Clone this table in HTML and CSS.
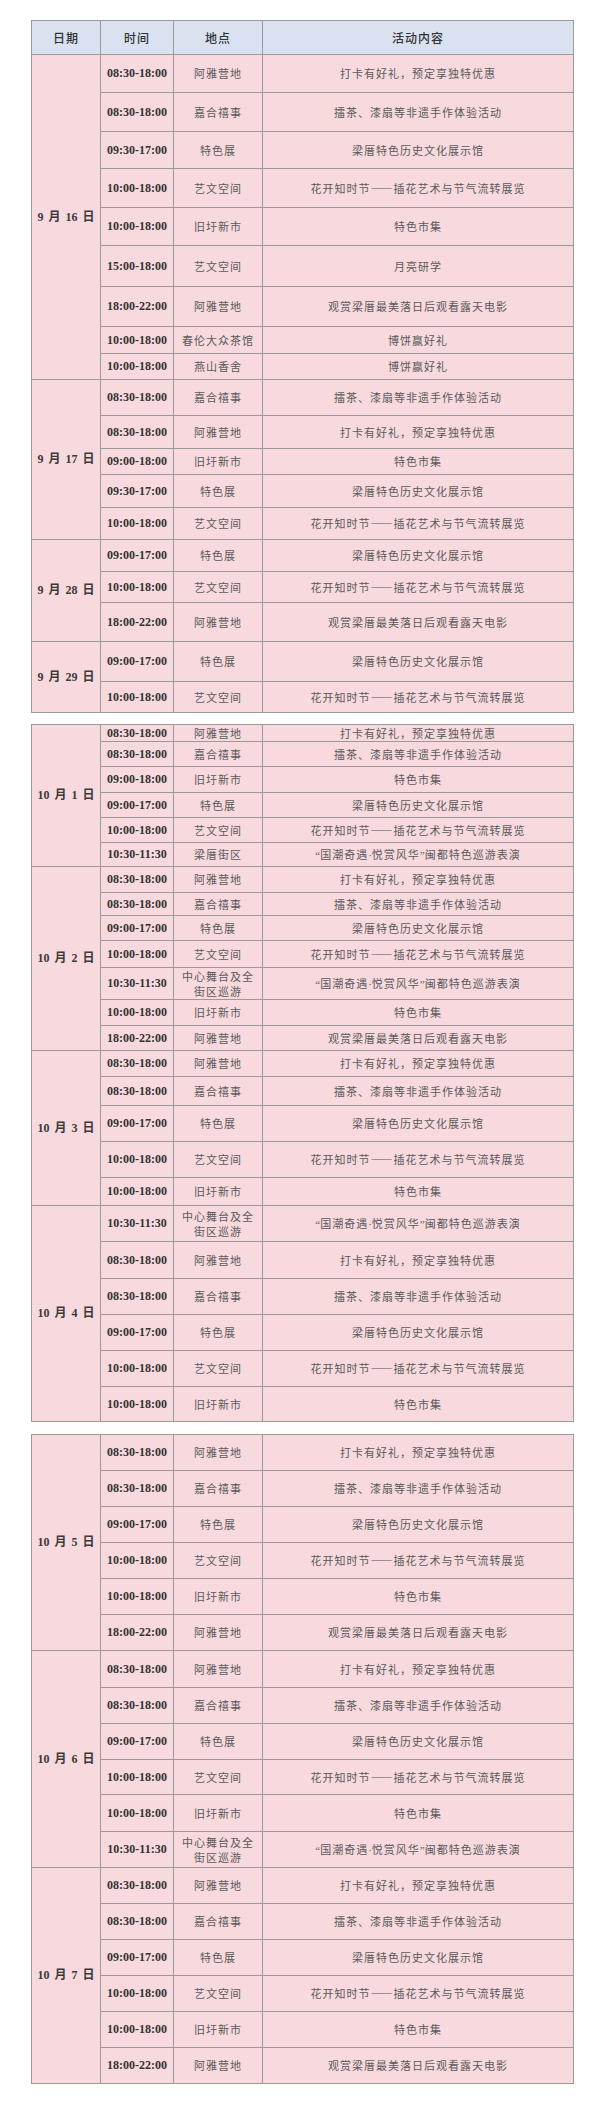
FILE: index.html
```html
<!DOCTYPE html>
<html lang="zh-CN">
<head>
<meta charset="utf-8">
<title>活动安排</title>
<link rel="stylesheet" href="styles.css">
</head>
<body>
<main class="page">
  <table class="sched">
    <colgroup><col class="c-date"><col class="c-time"><col class="c-place"><col class="c-act"></colgroup>
    <thead>
      <tr class="h34"><th>日期</th><th>时间</th><th>地点</th><th>活动内容</th></tr>
    </thead>
    <tbody>
      <tr class="h38"><td class="date" rowspan="9">9 月 16 日</td><td class="time">08:30-18:00</td><td class="place">阿雅营地</td><td class="act">打卡有好礼，预定享独特优惠</td></tr>
      <tr class="h39"><td class="time">08:30-18:00</td><td class="place">嘉合禧事</td><td class="act">擂茶、漆扇等非遗手作体验活动</td></tr>
      <tr class="h37"><td class="time">09:30-17:00</td><td class="place">特色展</td><td class="act">梁厝特色历史文化展示馆</td></tr>
      <tr class="h39"><td class="time">10:00-18:00</td><td class="place">艺文空间</td><td class="act">花开知时节——插花艺术与节气流转展览</td></tr>
      <tr class="h38"><td class="time">10:00-18:00</td><td class="place">旧圩新市</td><td class="act">特色市集</td></tr>
      <tr class="h41"><td class="time">15:00-18:00</td><td class="place">艺文空间</td><td class="act">月亮研学</td></tr>
      <tr class="h40"><td class="time">18:00-22:00</td><td class="place">阿雅营地</td><td class="act">观赏梁厝最美落日后观看露天电影</td></tr>
      <tr class="h27"><td class="time">10:00-18:00</td><td class="place">春伦大众茶馆</td><td class="act">博饼赢好礼</td></tr>
      <tr class="h26"><td class="time">10:00-18:00</td><td class="place">燕山香舍</td><td class="act">博饼赢好礼</td></tr>

      <tr class="h36"><td class="date" rowspan="5">9 月 17 日</td><td class="time">08:30-18:00</td><td class="place">嘉合禧事</td><td class="act">擂茶、漆扇等非遗手作体验活动</td></tr>
      <tr class="h33"><td class="time">08:30-18:00</td><td class="place">阿雅营地</td><td class="act">打卡有好礼，预定享独特优惠</td></tr>
      <tr class="h26"><td class="time">09:00-18:00</td><td class="place">旧圩新市</td><td class="act">特色市集</td></tr>
      <tr class="h33"><td class="time">09:30-17:00</td><td class="place">特色展</td><td class="act">梁厝特色历史文化展示馆</td></tr>
      <tr class="h32"><td class="time">10:00-18:00</td><td class="place">艺文空间</td><td class="act">花开知时节——插花艺术与节气流转展览</td></tr>

      <tr class="h32"><td class="date" rowspan="3">9 月 28 日</td><td class="time">09:00-17:00</td><td class="place">特色展</td><td class="act">梁厝特色历史文化展示馆</td></tr>
      <tr class="h31"><td class="time">10:00-18:00</td><td class="place">艺文空间</td><td class="act">花开知时节——插花艺术与节气流转展览</td></tr>
      <tr class="h39"><td class="time">18:00-22:00</td><td class="place">阿雅营地</td><td class="act">观赏梁厝最美落日后观看露天电影</td></tr>

      <tr class="h40"><td class="date" rowspan="2">9 月 29 日</td><td class="time">09:00-17:00</td><td class="place">特色展</td><td class="act">梁厝特色历史文化展示馆</td></tr>
      <tr class="h31"><td class="time">10:00-18:00</td><td class="place">艺文空间</td><td class="act">花开知时节——插花艺术与节气流转展览</td></tr>
    </tbody>
  </table>

  <table class="sched">
    <colgroup><col class="c-date"><col class="c-time"><col class="c-place"><col class="c-act"></colgroup>
    <tbody>
      <tr class="h17"><td class="date" rowspan="6">10 月 1 日</td><td class="time">08:30-18:00</td><td class="place">阿雅营地</td><td class="act">打卡有好礼，预定享独特优惠</td></tr>
      <tr class="h25"><td class="time">08:30-18:00</td><td class="place">嘉合禧事</td><td class="act">擂茶、漆扇等非遗手作体验活动</td></tr>
      <tr class="h26"><td class="time">09:00-18:00</td><td class="place">旧圩新市</td><td class="act">特色市集</td></tr>
      <tr class="h25"><td class="time">09:00-17:00</td><td class="place">特色展</td><td class="act">梁厝特色历史文化展示馆</td></tr>
      <tr class="h25"><td class="time">10:00-18:00</td><td class="place">艺文空间</td><td class="act">花开知时节——插花艺术与节气流转展览</td></tr>
      <tr class="h24"><td class="time">10:30-11:30</td><td class="place">梁厝街区</td><td class="act"><span class="lat">“</span>国潮奇遇<span class="lat">·</span>悦赏风华<span class="lat">”</span>闽都特色巡游表演</td></tr>

      <tr class="h26"><td class="date" rowspan="7">10 月 2 日</td><td class="time">08:30-18:00</td><td class="place">阿雅营地</td><td class="act">打卡有好礼，预定享独特优惠</td></tr>
      <tr class="h23"><td class="time">08:30-18:00</td><td class="place">嘉合禧事</td><td class="act">擂茶、漆扇等非遗手作体验活动</td></tr>
      <tr class="h25"><td class="time">09:00-17:00</td><td class="place">特色展</td><td class="act">梁厝特色历史文化展示馆</td></tr>
      <tr class="h27"><td class="time">10:00-18:00</td><td class="place">艺文空间</td><td class="act">花开知时节——插花艺术与节气流转展览</td></tr>
      <tr class="h32"><td class="time">10:30-11:30</td><td class="place">中心舞台及全街区巡游</td><td class="act"><span class="lat">“</span>国潮奇遇<span class="lat">·</span>悦赏风华<span class="lat">”</span>闽都特色巡游表演</td></tr>
      <tr class="h26"><td class="time">10:00-18:00</td><td class="place">旧圩新市</td><td class="act">特色市集</td></tr>
      <tr class="h25"><td class="time">18:00-22:00</td><td class="place">阿雅营地</td><td class="act">观赏梁厝最美落日后观看露天电影</td></tr>

      <tr class="h26"><td class="date" rowspan="5">10 月 3 日</td><td class="time">08:30-18:00</td><td class="place">阿雅营地</td><td class="act">打卡有好礼，预定享独特优惠</td></tr>
      <tr class="h29"><td class="time">08:30-18:00</td><td class="place">嘉合禧事</td><td class="act">擂茶、漆扇等非遗手作体验活动</td></tr>
      <tr class="h36"><td class="time">09:00-17:00</td><td class="place">特色展</td><td class="act">梁厝特色历史文化展示馆</td></tr>
      <tr class="h36"><td class="time">10:00-18:00</td><td class="place">艺文空间</td><td class="act">花开知时节——插花艺术与节气流转展览</td></tr>
      <tr class="h28"><td class="time">10:00-18:00</td><td class="place">旧圩新市</td><td class="act">特色市集</td></tr>

      <tr class="h36"><td class="date" rowspan="6">10 月 4 日</td><td class="time">10:30-11:30</td><td class="place">中心舞台及全街区巡游</td><td class="act"><span class="lat">“</span>国潮奇遇<span class="lat">·</span>悦赏风华<span class="lat">”</span>闽都特色巡游表演</td></tr>
      <tr class="h37"><td class="time">08:30-18:00</td><td class="place">阿雅营地</td><td class="act">打卡有好礼，预定享独特优惠</td></tr>
      <tr class="h36"><td class="time">08:30-18:00</td><td class="place">嘉合禧事</td><td class="act">擂茶、漆扇等非遗手作体验活动</td></tr>
      <tr class="h36"><td class="time">09:00-17:00</td><td class="place">特色展</td><td class="act">梁厝特色历史文化展示馆</td></tr>
      <tr class="h36"><td class="time">10:00-18:00</td><td class="place">艺文空间</td><td class="act">花开知时节——插花艺术与节气流转展览</td></tr>
      <tr class="h35"><td class="time">10:00-18:00</td><td class="place">旧圩新市</td><td class="act">特色市集</td></tr>
    </tbody>
  </table>

  <table class="sched">
    <colgroup><col class="c-date"><col class="c-time"><col class="c-place"><col class="c-act"></colgroup>
    <tbody>
      <tr class="h36"><td class="date" rowspan="6">10 月 5 日</td><td class="time">08:30-18:00</td><td class="place">阿雅营地</td><td class="act">打卡有好礼，预定享独特优惠</td></tr>
      <tr class="h36"><td class="time">08:30-18:00</td><td class="place">嘉合禧事</td><td class="act">擂茶、漆扇等非遗手作体验活动</td></tr>
      <tr class="h36"><td class="time">09:00-17:00</td><td class="place">特色展</td><td class="act">梁厝特色历史文化展示馆</td></tr>
      <tr class="h36"><td class="time">10:00-18:00</td><td class="place">艺文空间</td><td class="act">花开知时节——插花艺术与节气流转展览</td></tr>
      <tr class="h36"><td class="time">10:00-18:00</td><td class="place">旧圩新市</td><td class="act">特色市集</td></tr>
      <tr class="h36"><td class="time">18:00-22:00</td><td class="place">阿雅营地</td><td class="act">观赏梁厝最美落日后观看露天电影</td></tr>

      <tr class="h37"><td class="date" rowspan="6">10 月 6 日</td><td class="time">08:30-18:00</td><td class="place">阿雅营地</td><td class="act">打卡有好礼，预定享独特优惠</td></tr>
      <tr class="h36"><td class="time">08:30-18:00</td><td class="place">嘉合禧事</td><td class="act">擂茶、漆扇等非遗手作体验活动</td></tr>
      <tr class="h36"><td class="time">09:00-17:00</td><td class="place">特色展</td><td class="act">梁厝特色历史文化展示馆</td></tr>
      <tr class="h35"><td class="time">10:00-18:00</td><td class="place">艺文空间</td><td class="act">花开知时节——插花艺术与节气流转展览</td></tr>
      <tr class="h37"><td class="time">10:00-18:00</td><td class="place">旧圩新市</td><td class="act">特色市集</td></tr>
      <tr class="h36"><td class="time">10:30-11:30</td><td class="place">中心舞台及全街区巡游</td><td class="act"><span class="lat">“</span>国潮奇遇<span class="lat">·</span>悦赏风华<span class="lat">”</span>闽都特色巡游表演</td></tr>

      <tr class="h36"><td class="date" rowspan="6">10 月 7 日</td><td class="time">08:30-18:00</td><td class="place">阿雅营地</td><td class="act">打卡有好礼，预定享独特优惠</td></tr>
      <tr class="h36"><td class="time">08:30-18:00</td><td class="place">嘉合禧事</td><td class="act">擂茶、漆扇等非遗手作体验活动</td></tr>
      <tr class="h36"><td class="time">09:00-17:00</td><td class="place">特色展</td><td class="act">梁厝特色历史文化展示馆</td></tr>
      <tr class="h36"><td class="time">10:00-18:00</td><td class="place">艺文空间</td><td class="act">花开知时节——插花艺术与节气流转展览</td></tr>
      <tr class="h36"><td class="time">10:00-18:00</td><td class="place">旧圩新市</td><td class="act">特色市集</td></tr>
      <tr class="h36"><td class="time">18:00-22:00</td><td class="place">阿雅营地</td><td class="act">观赏梁厝最美落日后观看露天电影</td></tr>
    </tbody>
  </table>
</main>
</body>
</html>
```

FILE: styles.css
```css
html, body {
  margin: 0;
  padding: 0;
  background: #ffffff;
}

.page {
  width: 600px;
  padding: 20px 0 0 31px;
  box-sizing: border-box;
}

.sched {
  width: 542px;
  table-layout: fixed;
  border-collapse: collapse;
  border: 1px solid #9a9a9a;
  background: #f7d9de;
  margin: 0 0 11px 0;
}

.sched + .sched {
  margin-bottom: 12px;
}

.c-date { width: 69px; }
.c-time { width: 73px; }
.c-place { width: 89px; }
.c-act { width: 311px; }

.sched th,
.sched td {
  border: 1px solid #9a9a9a;
  padding: 0 4px;
  text-align: center;
  vertical-align: middle;
  line-height: 15px;
  overflow: hidden;
}

.sched th {
  background: #dae1f1;
  font-family: "Noto Sans CJK SC", sans-serif;
  font-size: 12px;
  font-weight: 500;
  color: #333333;
  letter-spacing: 1px;
}

.date {
  font-family: "Liberation Serif", "Noto Sans CJK SC", serif;
  font-size: 12px;
  font-weight: 700;
  color: #3a3a3a;
  white-space: nowrap;
  word-spacing: 2px;
}

.time {
  font-family: "Liberation Serif", serif;
  font-size: 12px;
  font-weight: 700;
  color: #333333;
  white-space: nowrap;
}

.place,
.act {
  font-family: "Noto Sans CJK SC", sans-serif;
  font-size: 11px;
  font-weight: 400;
  color: #5a5a5a;
  letter-spacing: 1px;
}

.lat {
  font-family: "Liberation Serif", serif;
  letter-spacing: 0;
}

.h17 { height: 17px; }
.h23 { height: 23px; }
.h24 { height: 24px; }
.h25 { height: 25px; }
.h26 { height: 26px; }
.h27 { height: 27px; }
.h28 { height: 28px; }
.h29 { height: 29px; }
.h31 { height: 31px; }
.h32 { height: 32px; }
.h33 { height: 33px; }
.h34 { height: 34px; }
.h35 { height: 35px; }
.h36 { height: 36px; }
.h37 { height: 37px; }
.h38 { height: 38px; }
.h39 { height: 39px; }
.h40 { height: 40px; }
.h41 { height: 41px; }
```
